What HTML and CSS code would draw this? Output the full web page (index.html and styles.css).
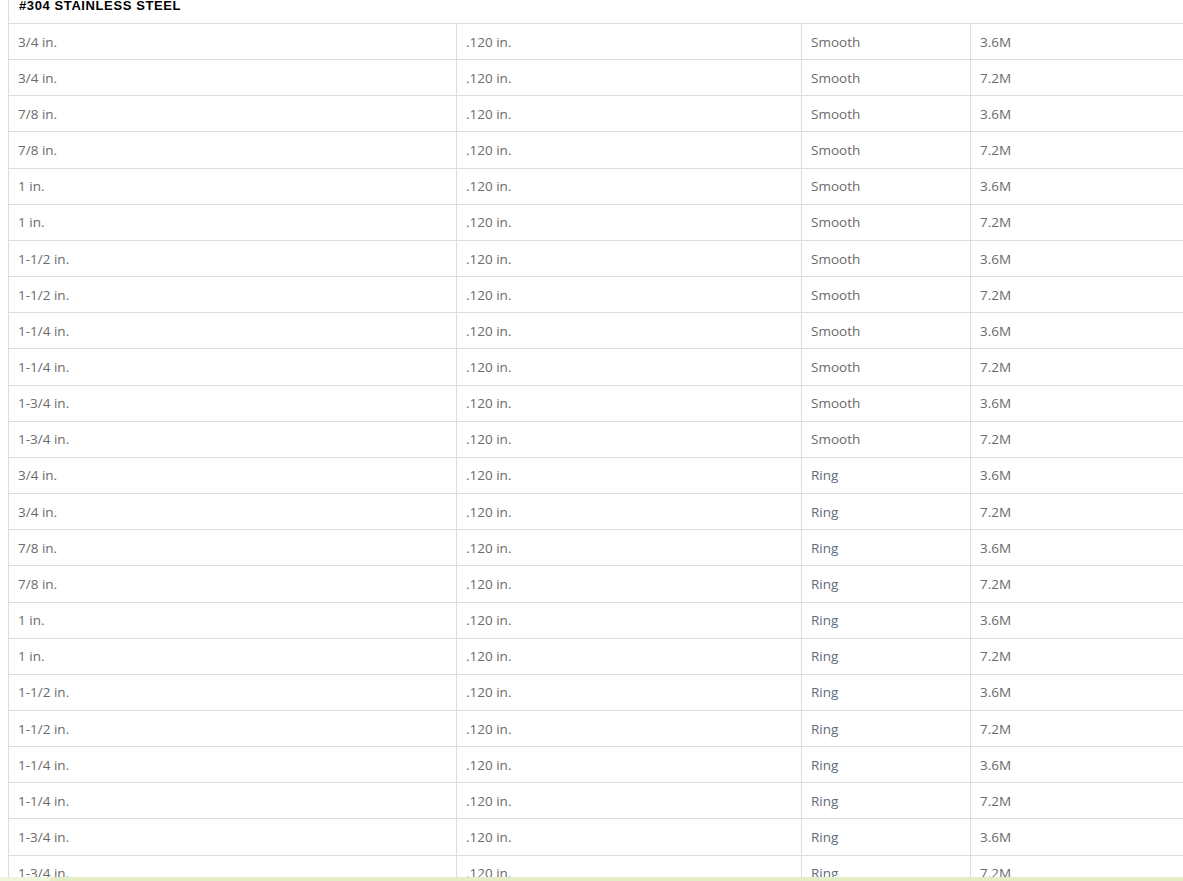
FILE: index.html
```html
<!DOCTYPE html>
<html>
<head>
  <title>#304 Stainless Steel</title>
  <link rel="stylesheet" href="styles.css">
</head>
<body>
  <div class="table-wrap">
    <table class="spec-table">
      <colgroup>
        <col class="col-size">
        <col class="col-gauge">
        <col class="col-shank">
        <col class="col-qty">
      </colgroup>
      <thead>
        <tr><th colspan="4">#304 Stainless Steel</th></tr>
      </thead>
      <tbody>
        <tr><td>3/4 in.</td><td>.120 in.</td><td>Smooth</td><td>3.6M</td></tr>
        <tr><td>3/4 in.</td><td>.120 in.</td><td>Smooth</td><td>7.2M</td></tr>
        <tr><td>7/8 in.</td><td>.120 in.</td><td>Smooth</td><td>3.6M</td></tr>
        <tr><td>7/8 in.</td><td>.120 in.</td><td>Smooth</td><td>7.2M</td></tr>
        <tr><td>1 in.</td><td>.120 in.</td><td>Smooth</td><td>3.6M</td></tr>
        <tr><td>1 in.</td><td>.120 in.</td><td>Smooth</td><td>7.2M</td></tr>
        <tr><td>1-1/2 in.</td><td>.120 in.</td><td>Smooth</td><td>3.6M</td></tr>
        <tr><td>1-1/2 in.</td><td>.120 in.</td><td>Smooth</td><td>7.2M</td></tr>
        <tr><td>1-1/4 in.</td><td>.120 in.</td><td>Smooth</td><td>3.6M</td></tr>
        <tr><td>1-1/4 in.</td><td>.120 in.</td><td>Smooth</td><td>7.2M</td></tr>
        <tr><td>1-3/4 in.</td><td>.120 in.</td><td>Smooth</td><td>3.6M</td></tr>
        <tr><td>1-3/4 in.</td><td>.120 in.</td><td>Smooth</td><td>7.2M</td></tr>
        <tr><td>3/4 in.</td><td>.120 in.</td><td class="ring">Ring</td><td>3.6M</td></tr>
        <tr><td>3/4 in.</td><td>.120 in.</td><td class="ring">Ring</td><td>7.2M</td></tr>
        <tr><td>7/8 in.</td><td>.120 in.</td><td class="ring">Ring</td><td>3.6M</td></tr>
        <tr><td>7/8 in.</td><td>.120 in.</td><td class="ring">Ring</td><td>7.2M</td></tr>
        <tr><td>1 in.</td><td>.120 in.</td><td class="ring">Ring</td><td>3.6M</td></tr>
        <tr><td>1 in.</td><td>.120 in.</td><td class="ring">Ring</td><td>7.2M</td></tr>
        <tr><td>1-1/2 in.</td><td>.120 in.</td><td class="ring">Ring</td><td>3.6M</td></tr>
        <tr><td>1-1/2 in.</td><td>.120 in.</td><td class="ring">Ring</td><td>7.2M</td></tr>
        <tr><td>1-1/4 in.</td><td>.120 in.</td><td class="ring">Ring</td><td>3.6M</td></tr>
        <tr><td>1-1/4 in.</td><td>.120 in.</td><td class="ring">Ring</td><td>7.2M</td></tr>
        <tr><td>1-3/4 in.</td><td>.120 in.</td><td class="ring">Ring</td><td>3.6M</td></tr>
        <tr><td>1-3/4 in.</td><td>.120 in.</td><td class="ring">Ring</td><td>7.2M</td></tr>
      </tbody>
    </table>
  </div>
  <div class="bottom-bar"></div>
</body>
</html>
```

FILE: styles.css
```css
html, body {
  height: 100%;
  overflow: hidden;
}

body {
  background-color: #fff;
  font-family: "Open Sans", Arial, sans-serif;
  margin: 0;
  padding: 0 0 0 8px;
}

.table-wrap {
  margin-top: -12px;
  overflow: hidden;
}

.spec-table {
  border-collapse: collapse;
  table-layout: fixed;
  width: 1200px;
}

.col-size { width: 448px; }
.col-gauge { width: 345px; }
.col-shank { width: 169px; }
.col-qty { width: 238px; }

.spec-table th {
  font-family: "Liberation Sans", Arial, sans-serif;
  font-size: 13px;
  font-weight: bold;
  text-transform: uppercase;
  letter-spacing: 0.6px;
  color: #000;
  text-align: left;
  height: 35px;
  padding: 0 10px;
  border-left: 1px solid #ddd;
  border-bottom: 1px solid #ddd;
}

.spec-table td {
  font-size: 13.5px;
  color: #6b6b6b;
  height: 35.17px;
  line-height: 20px;
  padding: 0 9px;
  border: 1px solid #ddd;
}

.spec-table td.ring {
  color: #5f6b7c;
}

.bottom-bar {
  position: fixed;
  left: 0;
  right: 0;
  bottom: 0;
  height: 4px;
  background: linear-gradient(to right, #eef5dd 0, #eef5dd 50px, #e3eec7 50px);
}
```
